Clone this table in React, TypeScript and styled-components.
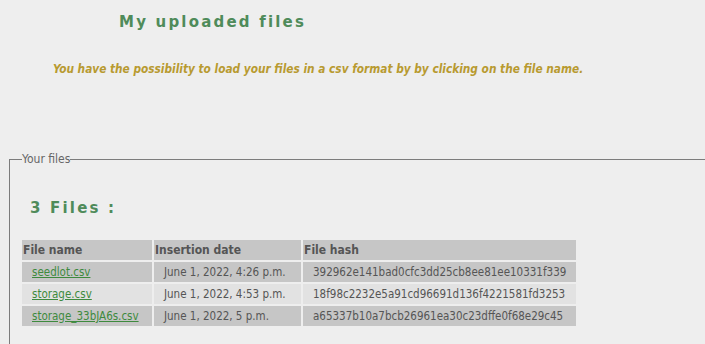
import React from 'react';
import styled, { createGlobalStyle } from 'styled-components';

const GlobalStyle = createGlobalStyle`
  html, body {
    margin: 0;
    padding: 0;
    background: #eeeeee;
    overflow: hidden;
  }
  body {
    font-family: "DejaVu Sans Condensed", "DejaVu Sans", sans-serif;
    color: #555555;
  }
`;

const Page = styled.div`
  width: 705px;
  height: 344px;
  padding-top: 13px;
  box-sizing: border-box;
`;

const Heading = styled.h1<{ $indent: number; $top: number }>`
  margin: ${({ $top }) => $top}px 0 0 ${({ $indent }) => $indent}px;
  font-family: "DejaVu Sans", sans-serif;
  font-size: 15px;
  font-weight: bold;
  letter-spacing: 2.2px;
  color: #4f8b5a;
  line-height: 19px;
`;

const Intro = styled.p`
  margin: 30px 0 0 53px;
  font-size: 11.75px;
  font-weight: bold;
  font-style: italic;
  color: #b89a30;
  line-height: 15px;
`;

const Box = styled.fieldset`
  margin: 75px 0 0 9px;
  width: 720px;
  height: 200px;
  padding: 0 0 0 10px;
  border: 1px solid #7c7c7c;
  box-sizing: border-box;
`;

const Legend = styled.legend`
  padding: 0;
  margin-left: 2px;
  font-size: 12px;
  color: #666666;
`;

const Table = styled.table`
  margin-top: 20px;
  border-spacing: 2px;
  font-size: 11.5px;
`;

const HeadCell = styled.th<{ $w: number }>`
  width: ${({ $w }) => $w}px;
  height: 20px;
  padding: 0 1px;
  background: #c6c6c6;
  color: #555555;
  text-align: left;
  font-size: 12px;
  font-weight: bold;
`;

const Cell = styled.td<{ $light?: boolean }>`
  height: 20px;
  padding: 0 10px;
  background: ${({ $light }) => ($light ? '#e2e2e2' : '#c6c6c6')};
  color: #555555;
  white-space: nowrap;
`;

const FileLink = styled.a`
  color: #3e8a3e;
  text-decoration: underline;
`;

const files = [
  { name: 'seedlot.csv', date: 'June 1, 2022, 4:26 p.m.', hash: '392962e141bad0cfc3dd25cb8ee81ee10331f339' },
  { name: 'storage.csv', date: 'June 1, 2022, 4:53 p.m.', hash: '18f98c2232e5a91cd96691d136f4221581fd3253' },
  { name: 'storage_33bJA6s.csv', date: 'June 1, 2022, 5 p.m.', hash: 'a65337b10a7bcb26961ea30c23dffe0f68e29c45' },
];

export default function App() {
  return (
    <Page>
      <GlobalStyle />
      <Heading $indent={119} $top={0}>My uploaded files</Heading>
      <Intro>You have the possibility to load your files in a csv format by by clicking on the file name.</Intro>
      <Box>
        <Legend>Your files</Legend>
        <Heading as="h2" $indent={10} $top={33}>3 Files :</Heading>
        <Table>
          <thead>
            <tr>
              <HeadCell $w={128}>File name</HeadCell>
              <HeadCell $w={145}>Insertion date</HeadCell>
              <HeadCell $w={270}>File hash</HeadCell>
            </tr>
          </thead>
          <tbody>
            {files.map((f, i) => (
              <tr key={f.hash}>
                <Cell $light={i % 2 === 1}>
                  <FileLink href="#">{f.name}</FileLink>
                </Cell>
                <Cell $light={i % 2 === 1}>{f.date}</Cell>
                <Cell $light={i % 2 === 1}>{f.hash}</Cell>
              </tr>
            ))}
          </tbody>
        </Table>
      </Box>
    </Page>
  );
}
